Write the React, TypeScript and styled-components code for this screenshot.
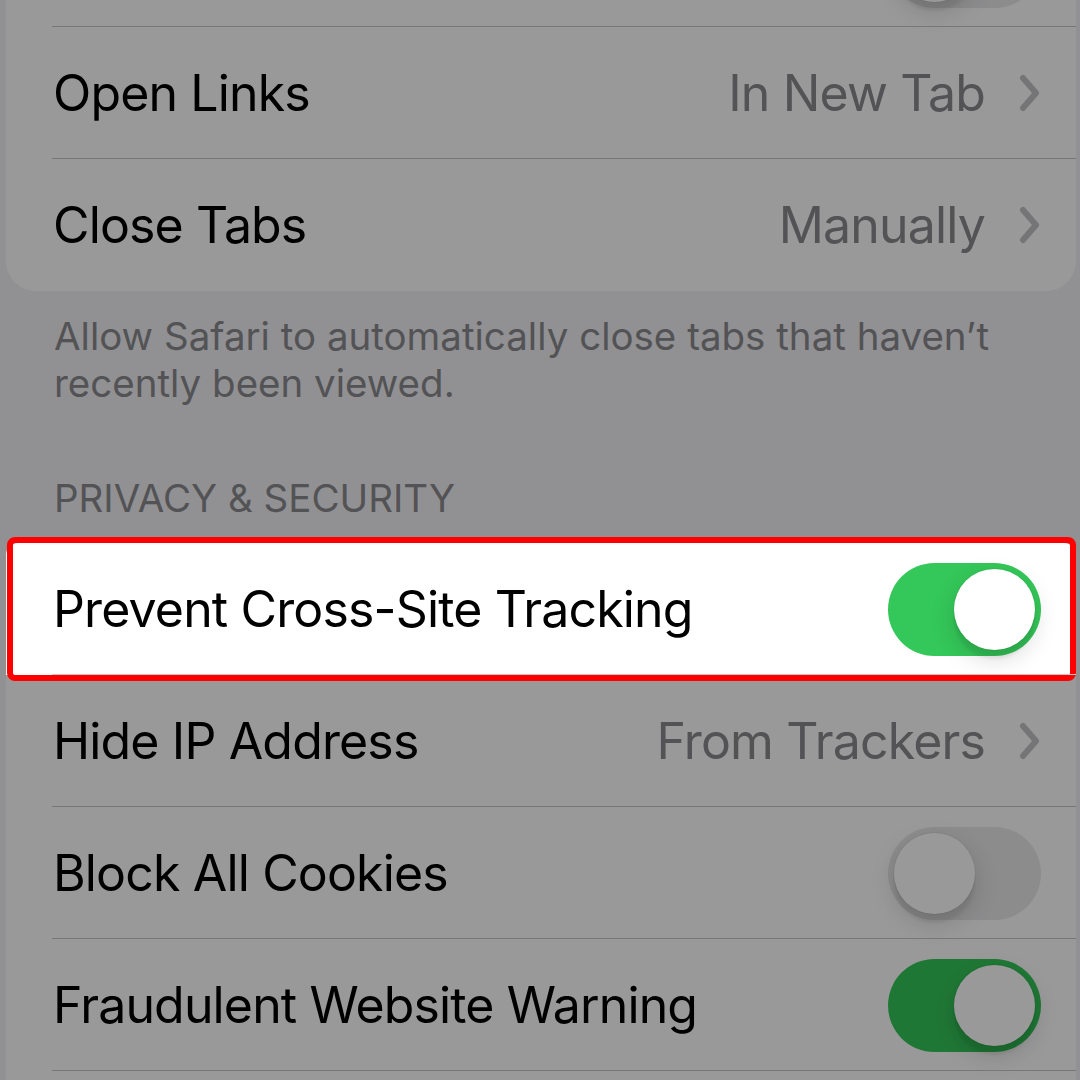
import React, { FC } from 'react';
import styled, { createGlobalStyle } from 'styled-components';

const Color = {
  groupBg: '#f2f2f7',
  card: '#ffffff',
  label: '#000000',
  secondary: '#8a8a8e',
  tertiary: '#c4c4c7',
  separator: '#c6c6c8',
  green: '#34c759',
  offTrack: '#e9e9eb',
  highlight: '#ff0000',
};

const GlobalStyle = createGlobalStyle`
  html, body {
    margin: 0;
    padding: 0;
    background: ${Color.groupBg};
  }
  body {
    font-family: Inter, "Noto Sans", "DejaVu Sans", sans-serif;
    -webkit-font-smoothing: antialiased;
  }
`;

const Page = styled.div`
  height: 1080px;
  overflow: hidden;
  background: ${Color.groupBg};
`;

const Scroll = styled.div`
  margin-top: -105px;
`;

const Group = styled.section`
  margin: 0 4px 0 6px;
  background: ${Color.card};
  border-radius: 30px;
`;

const Row = styled.div<{ $highlighted?: boolean; $last?: boolean }>`
  position: relative;
  display: flex;
  align-items: center;
  height: 132px;
  padding: 0 35px 0 47px;
  box-sizing: border-box;
  background: ${(p) => (p.$highlighted ? Color.card : 'transparent')};
  border-radius: ${(p) => (p.$highlighted ? '12px 12px 0 0' : '0')};
  z-index: ${(p) => (p.$highlighted ? 2 : 'auto')};

  &::after {
    content: '';
    display: ${(p) => (p.$last ? 'none' : 'block')};
    position: absolute;
    left: 46px;
    right: 0;
    bottom: 0;
    height: 1px;
    background: ${Color.separator};
  }

  &::before {
    content: '';
    display: ${(p) => (p.$highlighted ? 'block' : 'none')};
    position: absolute;
    top: -6px;
    bottom: -6px;
    left: 1px;
    right: 0;
    border: 6px solid ${Color.highlight};
    border-radius: 8px;
    pointer-events: none;
  }
`;

const Label = styled.span`
  flex: 1;
  font-size: 50px;
  letter-spacing: -0.85px;
  color: ${Color.label};
  white-space: nowrap;
`;

const Value = styled.span`
  font-size: 50px;
  letter-spacing: -0.85px;
  color: ${Color.secondary};
  white-space: nowrap;
`;

const ChevronIcon = styled.svg`
  width: 22px;
  height: 38px;
  margin-left: 34px;
  flex-shrink: 0;
`;

const Track = styled.div<{ $on: boolean }>`
  display: flex;
  align-items: center;
  justify-content: ${(p) => (p.$on ? 'flex-end' : 'flex-start')};
  width: 153px;
  height: 93px;
  padding: 6px;
  box-sizing: border-box;
  border-radius: 47px;
  background: ${(p) => (p.$on ? Color.green : Color.offTrack)};
  flex-shrink: 0;
`;

const Knob = styled.div`
  width: 81px;
  height: 81px;
  border-radius: 50%;
  background: #fff;
  box-shadow: 0 9px 24px rgba(0, 0, 0, 0.15), 0 9px 3px rgba(0, 0, 0, 0.06),
    0 0 0 1px rgba(0, 0, 0, 0.04);
`;

const Footer = styled.p`
  margin: 0;
  padding: 22px 60px 0 54px;
  font-size: 38.5px;
  line-height: 47px;
  color: ${Color.secondary};
`;

const Header = styled.h2`
  margin: 67px 0 0;
  padding: 0 54px 21px;
  font-size: 38.5px;
  line-height: 48px;
  font-weight: 400;
  text-transform: uppercase;
  color: ${Color.secondary};
`;

const Dim = styled.div`
  position: fixed;
  inset: 0;
  background: rgba(0, 0, 0, 0.4);
  z-index: 1;
  pointer-events: none;
`;

const Chevron: FC = () => (
  <ChevronIcon viewBox="0 0 22 38">
    <path
      d="M4 4 L17 19 L4 34"
      fill="none"
      stroke={Color.tertiary}
      strokeWidth={6}
      strokeLinecap="round"
      strokeLinejoin="round"
    />
  </ChevronIcon>
);

const Toggle: FC<{ on: boolean }> = ({ on }) => (
  <Track $on={on}>
    <Knob />
  </Track>
);

type Item =
  | { label: string; value: string }
  | { label: string; toggle: boolean };

const RowItem: FC<{ item: Item; last?: boolean; highlighted?: boolean }> = ({
  item,
  last,
  highlighted,
}) => (
  <Row $last={last} $highlighted={highlighted}>
    <Label>{item.label}</Label>
    {'value' in item ? (
      <>
        <Value>{item.value}</Value>
        <Chevron />
      </>
    ) : (
      <Toggle on={item.toggle} />
    )}
  </Row>
);

// the rows above and below the visible area only show their edges
const tabs: Item[] = [
  { label: '', toggle: false },
  { label: 'Open Links', value: 'In New Tab' },
  { label: 'Close Tabs', value: 'Manually' },
];

const privacy: Item[] = [
  { label: 'Prevent Cross-Site Tracking', toggle: true },
  { label: 'Hide IP Address', value: 'From Trackers' },
  { label: 'Block All Cookies', toggle: false },
  { label: 'Fraudulent Website Warning', toggle: true },
  { label: '', toggle: true },
];

export default function App() {
  return (
    <Page>
      <GlobalStyle />
      <Scroll>
        <Group>
          {tabs.map((item, i) => (
            <RowItem key={i} item={item} last={i === tabs.length - 1} />
          ))}
        </Group>
        <Footer>
          Allow Safari to automatically close tabs that haven’t recently been
          viewed.
        </Footer>
        <Header>Privacy &amp; Security</Header>
        <Group>
          {privacy.map((item, i) => (
            <RowItem
              key={i}
              item={item}
              highlighted={i === 0}
              last={i === privacy.length - 1}
            />
          ))}
        </Group>
      </Scroll>
      <Dim />
    </Page>
  );
}
